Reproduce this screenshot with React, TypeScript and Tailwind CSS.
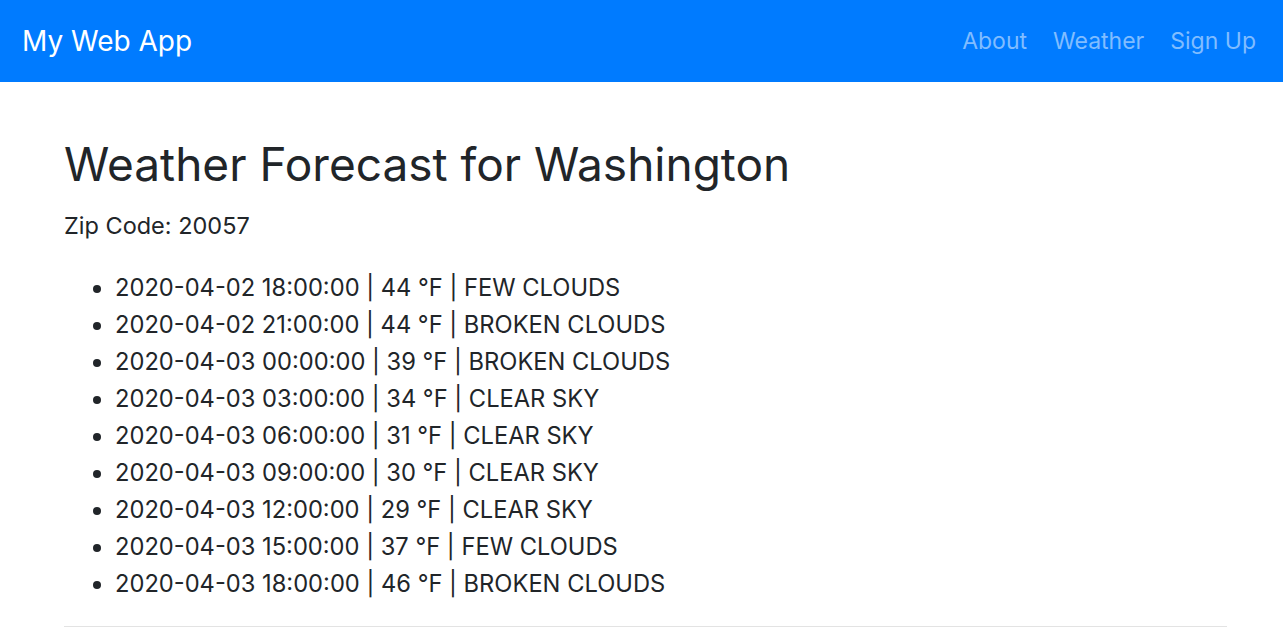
const forecasts = [
  { time: "2020-04-02 18:00:00", temp: 44, desc: "FEW CLOUDS" },
  { time: "2020-04-02 21:00:00", temp: 44, desc: "BROKEN CLOUDS" },
  { time: "2020-04-03 00:00:00", temp: 39, desc: "BROKEN CLOUDS" },
  { time: "2020-04-03 03:00:00", temp: 34, desc: "CLEAR SKY" },
  { time: "2020-04-03 06:00:00", temp: 31, desc: "CLEAR SKY" },
  { time: "2020-04-03 09:00:00", temp: 30, desc: "CLEAR SKY" },
  { time: "2020-04-03 12:00:00", temp: 29, desc: "CLEAR SKY" },
  { time: "2020-04-03 15:00:00", temp: 37, desc: "FEW CLOUDS" },
  { time: "2020-04-03 18:00:00", temp: 46, desc: "BROKEN CLOUDS" },
];

const Navbar = () => (
  <nav className="flex h-[82px] items-center justify-between bg-[#007bff] pl-[22px] pr-[27px]">
    <a href="#" className="text-[28px] leading-none text-white">
      My Web App
    </a>
    <ul className="flex items-center gap-[26px] text-[23px] text-[#80bdff]">
      <li>
        <a href="#">About</a>
      </li>
      <li>
        <a href="#">Weather</a>
      </li>
      <li>
        <a href="#">Sign Up</a>
      </li>
    </ul>
  </nav>
);

export default function App() {
  return (
    <div
      className="min-h-screen bg-white text-[#212529]"
      style={{ fontFamily: "Inter, 'Noto Sans', sans-serif" }}
    >
      <Navbar />

      {/* Forecast */}
      <main className="pl-[64px] pr-[56px] pt-[53px]">
        <h1 className="text-[46px] leading-[58px] font-normal">
          Weather Forecast for Washington
        </h1>
        <p className="mt-[15px] text-[23.5px] leading-[35px]">Zip Code: 20057</p>

        <ul className="mt-[26px] list-disc pl-[51px] text-[23.7px] leading-[37px]">
          {forecasts.map((f) => (
            <li key={f.time}>
              {f.time} | {f.temp} °F | {f.desc}
            </li>
          ))}
        </ul>

        <hr className="mt-[24px] border-t border-[#e3e3e3]" />
      </main>
    </div>
  );
}
